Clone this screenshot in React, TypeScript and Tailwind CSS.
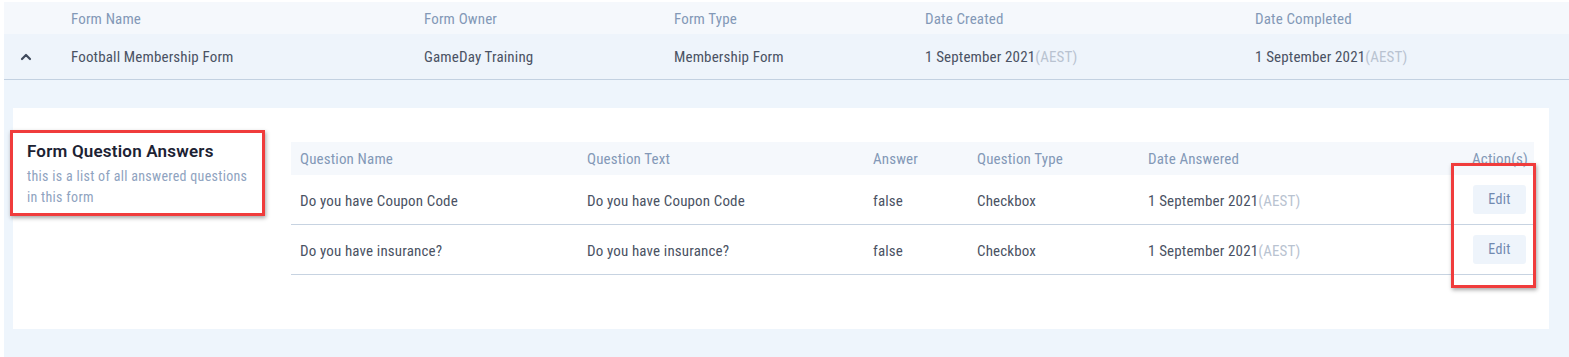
import React from "react";

const font = { fontFamily: '"Roboto Condensed", Roboto, sans-serif' };

function Date21() {
  return (
    <span>
      <span className="text-[#4a5263]">1 September 2021</span>
      <span className="text-[#b9c3d1]">(AEST)</span>
    </span>
  );
}

function Chevron() {
  return (
    <svg width="14" height="14" viewBox="0 0 14 14" fill="none">
      <path d="M3 9 L7 5 L11 9" stroke="#3f4a5c" strokeWidth="2.2" strokeLinecap="round" strokeLinejoin="round" />
    </svg>
  );
}

const qRows = [
  { name: "Do you have Coupon Code", text: "Do you have Coupon Code" },
  { name: "Do you have insurance?", text: "Do you have insurance?" },
];

export default function App() {
  return (
    <div className="relative w-[1569px] h-[357px] bg-white pl-[4px] pt-[2px] text-[15px] tracking-[0.15px]" style={font}>
      <div className="bg-[#eef5fc] h-full">
        {/* top header */}
        <div className="grid grid-cols-[67px_353px_250px_251px_330px_1fr] h-[32px] pt-[3px] items-center bg-[#f5f8fc] text-[#8398b7]">
          <div />
          <div>Form Name</div>
          <div>Form Owner</div>
          <div>Form Type</div>
          <div>Date Created</div>
          <div>Date Completed</div>
        </div>
        {/* data row */}
        <div className="grid grid-cols-[67px_353px_250px_251px_330px_1fr] h-[46px] pt-[2px] items-center bg-[#eef4fb] border-b border-[#c3d1e1] text-[#4a5263]">
          <div className="flex pl-[15px] pb-[2px]">
            <Chevron />
          </div>
          <div>Football Membership Form</div>
          <div>GameDay Training</div>
          <div>Membership Form</div>
          <div><Date21 /></div>
          <div><Date21 /></div>
        </div>
        {/* expanded */}
        <div className="pl-[9px] pr-[20px] pt-[28px]">
          <div className="bg-white h-[221px] flex pt-[34px] pr-[15px]">
            <div className="w-[278px] pl-[14px] mt-[-2px]">
              <div className="text-[17px] font-semibold text-[#1c2233] leading-[22px] tracking-[0.2px]" style={{ fontFamily: 'Roboto, sans-serif' }}>
                Form Question Answers
              </div>
              <div className="text-[14px] text-[#8fa3c0] leading-[21px] mt-[4px] w-[232px] tracking-[0.3px]">
                this is a list of all answered questions in this form
              </div>
            </div>
            <div className="flex-1">
              <div className="grid grid-cols-[287px_286px_104px_171px_1fr_100px] h-[33px] pt-[1px] items-center bg-[#f5f8fc] text-[#8398b7]">
                <div className="pl-[9px]">Question Name</div>
                <div className="pl-[9px]">Question Text</div>
                <div className="pl-[9px]">Answer</div>
                <div className="pl-[9px]">Question Type</div>
                <div className="pl-[9px]">Date Answered</div>
                <div className="pr-[6px] text-right">Action(s)</div>
              </div>
              {qRows.map((r, i) => (
                <div
                  key={i}
                  className="grid grid-cols-[287px_286px_104px_171px_1fr_100px] h-[50px] items-center border-b border-[#c7d3e1] text-[#4a5263]"
                >
                  <div className="pl-[9px] pt-[3px]">{r.name}</div>
                  <div className="pl-[9px] pt-[3px]">{r.text}</div>
                  <div className="pl-[9px] pt-[3px]">false</div>
                  <div className="pl-[9px] pt-[3px]">Checkbox</div>
                  <div className="pl-[9px] pt-[3px]"><Date21 /></div>
                  <div className="flex justify-end pr-[8px]">
                    <button className="w-[53px] h-[29px] rounded-[3px] bg-[#eef4fb] text-[#7189b0] text-[14px] tracking-[0.3px]">
                      Edit
                    </button>
                  </div>
                </div>
              ))}
            </div>
          </div>
        </div>
      </div>
      {/* annotation boxes */}
      <div className="absolute left-[10px] top-[130px] w-[255px] h-[86px] border-[3px] border-[#f03c3c] shadow-[1px_2px_4px_rgba(0,0,0,0.35)]" />
      <div className="absolute left-[1451px] top-[163px] w-[85px] h-[125px] border-[3px] border-[#f03c3c] shadow-[1px_2px_4px_rgba(0,0,0,0.35)]" />
    </div>
  );
}
